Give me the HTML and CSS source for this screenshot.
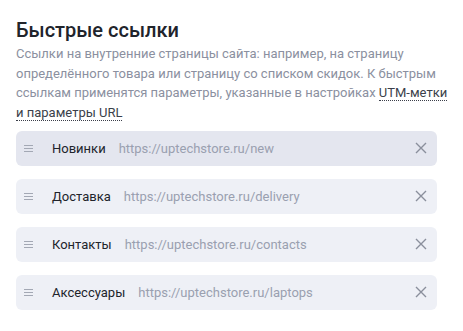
FILE: index.html
```html
<!DOCTYPE html>
<html lang="ru">
<head>
    <meta charset="UTF-8">
    <meta name="viewport" content="width=device-width, initial-scale=1.0">
    <title>Быстрые ссылки</title>
    <link rel="stylesheet" href="styles.css">
</head>
<body>
    <div class="quick-links">
        <div class="section-header">
            <h2>Быстрые ссылки</h2>
            <p>
                Ссылки на внутренние страницы сайта: например, на страницу
                определённого товара или страницу со списком скидок. К быстрым
                ссылкам применятся параметры, указанные в настройках
                <a href="#" class="hint-link">UTM-метки и параметры URL</a>
            </p>
        </div>

        <ul class="link-list">
            <li class="link-row active">
                <span class="drag-handle"><i></i><i></i><i></i></span>
                <span class="link-name">Новинки</span>
                <span class="link-url">https://uptechstore.ru/new</span>
                <button class="remove-btn" aria-label="Удалить">
                    <svg width="12" height="12" viewBox="0 0 12 12"><path d="M1 1L11 11M11 1L1 11" stroke="currentColor" stroke-width="1.4" fill="none"/></svg>
                </button>
            </li>
            <li class="link-row">
                <span class="drag-handle"><i></i><i></i><i></i></span>
                <span class="link-name">Доставка</span>
                <span class="link-url">https://uptechstore.ru/delivery</span>
                <button class="remove-btn" aria-label="Удалить">
                    <svg width="12" height="12" viewBox="0 0 12 12"><path d="M1 1L11 11M11 1L1 11" stroke="currentColor" stroke-width="1.4" fill="none"/></svg>
                </button>
            </li>
            <li class="link-row">
                <span class="drag-handle"><i></i><i></i><i></i></span>
                <span class="link-name">Контакты</span>
                <span class="link-url">https://uptechstore.ru/contacts</span>
                <button class="remove-btn" aria-label="Удалить">
                    <svg width="12" height="12" viewBox="0 0 12 12"><path d="M1 1L11 11M11 1L1 11" stroke="currentColor" stroke-width="1.4" fill="none"/></svg>
                </button>
            </li>
            <li class="link-row">
                <span class="drag-handle"><i></i><i></i><i></i></span>
                <span class="link-name">Аксессуары</span>
                <span class="link-url">https://uptechstore.ru/laptops</span>
                <button class="remove-btn" aria-label="Удалить">
                    <svg width="12" height="12" viewBox="0 0 12 12"><path d="M1 1L11 11M11 1L1 11" stroke="currentColor" stroke-width="1.4" fill="none"/></svg>
                </button>
            </li>
        </ul>
    </div>
</body>
</html>
```

FILE: styles.css
```css
* {
    margin: 0;
    padding: 0;
    box-sizing: border-box;
    font-family: Roboto, 'Noto Sans', sans-serif;
}

body {
    background-color: #fff;
    padding: 18px 10px 0 16px;
}

.section-header h2 {
    color: #21242b;
    font-size: 20px;
    font-weight: 500;
    line-height: 24px;
    margin-bottom: 2px;
}

.section-header p {
    color: #8b90a0;
    font-size: 13px;
    line-height: 19.7px;
}

.hint-link {
    color: #3b3f4a;
    text-decoration: none;
    border-bottom: 1px dotted #3b3f4a;
}

.link-list {
    list-style: none;
    margin: 8px 16px 0 0;
    display: flex;
    flex-direction: column;
    gap: 13px;
}

.link-row {
    display: flex;
    align-items: center;
    height: 35px;
    padding: 0 10px 0 8px;
    background-color: #eef0f6;
    border-radius: 6px;
    font-size: 13px;
}

.link-row.active {
    background-color: #e4e6ef;
}

.drag-handle {
    display: flex;
    flex-direction: column;
    gap: 2px;
    width: 9px;
    margin-right: 19px;
}

.drag-handle i {
    display: block;
    height: 1px;
    background-color: #a3a8b4;
}

.link-name {
    color: #21242b;
    margin-right: 13px;
}

.link-url {
    color: #9aa0b0;
    flex: 1;
}

.remove-btn {
    border: none;
    background: none;
    color: #8a8f9c;
    display: flex;
    align-items: center;
    cursor: pointer;
}
```
